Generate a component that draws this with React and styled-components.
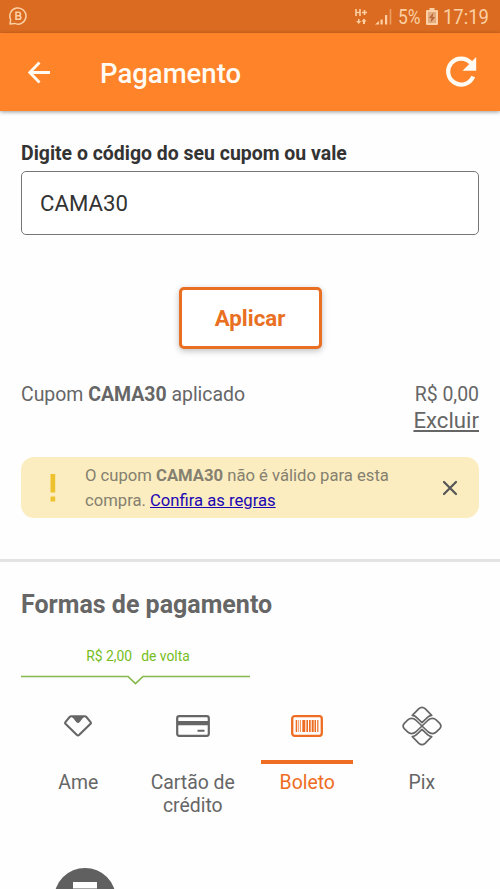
import styled, { createGlobalStyle } from 'styled-components';

const GlobalStyle = createGlobalStyle`
    * {
        box-sizing: border-box;
        margin: 0;
        padding: 0;
    }
    body {
        background-color: #fefefe;
        color: #666;
        font-family: Roboto, sans-serif;
        overflow: hidden;
    }
    button {
        font-family: inherit;
        background: none;
        border: none;
        cursor: pointer;
    }
    svg {
        display: block;
    }
`;

const Screen = styled.div`
    width: 500px;
    height: 889px;
    overflow: hidden;
    display: flex;
    flex-direction: column;
    > * {
        flex-shrink: 0;
    }
`;

const StatusBar = styled.div`
    height: 33px;
    padding: 0 11px 0 9px;
    display: flex;
    align-items: center;
    justify-content: space-between;
    background-color: #da6b20;
    color: #fcd0a4;
`;

const StatusIcons = styled.div`
    display: flex;
    align-items: center;
    height: 33px;
`;

const SignalWrap = styled.div`
    margin: 0 6px 0 7px;
`;

const StatusText = styled.span`
    width: ${({ $width }) => $width}px;
    margin-left: ${({ $gap }) => $gap || 0}px;
    font-size: 20px;
    line-height: 33px;
    white-space: nowrap;
    padding-top: 1px;
    transform: scaleX(${({ $scale }) => $scale});
    transform-origin: left;
`;

const Header = styled.header`
    height: 78px;
    padding: 0 23px 0 28px;
    display: flex;
    align-items: center;
    background-color: #fe8329;
    color: #fffaf2;
    box-shadow: 0 1px 4px rgba(0, 0, 0, 0.4);
    h1 {
        flex: 1;
        margin-left: 49px;
        font-size: 27.5px;
        font-weight: 500;
        line-height: 32px;
        padding-top: 4px;
    }
`;

const CouponSection = styled.section`
    height: 448px;
    padding: 31px 21px 0;
    display: flex;
    flex-direction: column;
    label {
        font-size: 19.45px;
        font-weight: 700;
        line-height: 24px;
        color: #333;
    }
`;

const CouponInput = styled.input`
    height: 64px;
    margin-top: 5px;
    padding: 0 18px;
    border: 1px solid #777;
    border-radius: 5px;
    outline: none;
    background-color: #fff;
    color: #333;
    font-family: inherit;
    font-size: 22.2px;
`;

const ApplyButton = styled.button`
    align-self: center;
    width: 143px;
    height: 62px;
    margin-top: 52px;
    border: 3px solid #e96f23;
    border-radius: 5px;
    background-color: #fff;
    box-shadow: 0 2px 6px rgba(0, 0, 0, 0.25);
    color: #e96f23;
    font-size: 22.3px;
    font-weight: 700;
`;

const AppliedRow = styled.div`
    margin-top: 33px;
    display: flex;
    justify-content: space-between;
    font-size: 19.45px;
    line-height: 26px;
`;

const AppliedValue = styled.div`
    display: flex;
    flex-direction: column;
    align-items: flex-end;
    button {
        color: #666;
        font-size: 22.2px;
        line-height: 24px;
        text-decoration: underline;
    }
`;

const Alert = styled.div`
    height: 61px;
    margin-top: 25px;
    padding: 0 21px 0 28px;
    display: flex;
    align-items: center;
    border-radius: 13px;
    background-color: #fbedc0;
    color: #85806f;
    p {
        flex: 1;
        margin-left: 28px;
        font-size: 16.65px;
        line-height: 25px;
        white-space: nowrap;
    }
    a {
        color: #1c06b4;
        text-decoration: underline;
    }
`;

const PaymentSection = styled.section`
    border-top: 3px solid #e3e3e3;
    padding: 28px 21px 0;
    h2 {
        font-size: 25px;
        font-weight: 700;
        line-height: 30px;
    }
`;

const Cashback = styled.div`
    width: 229px;
    margin-top: 27px;
    color: #76bd22;
    p {
        padding-left: 5px;
        text-align: center;
        font-size: 13.9px;
        line-height: 18px;
    }
    span {
        margin-left: 9px;
    }
    svg {
        margin-top: 10px;
    }
`;

const Tabs = styled.div`
    display: grid;
    grid-template-columns: repeat(4, 1fr);
    margin-top: 20px;
`;

const Tab = styled.button`
    display: flex;
    flex-direction: column;
    align-items: center;
    color: ${({ $active }) => ($active ? '#ee6d22' : '#666')};
    font-size: 19.4px;
    line-height: 23px;
    .icon {
        height: 41px;
        display: flex;
        align-items: center;
        justify-content: center;
    }
    .label {
        max-width: 100px;
    }
    .bar {
        width: 92px;
        height: 4px;
        margin: 14px 0 7px;
        background-color: ${({ $active }) =>
            $active ? '#ee6d22' : 'transparent'};
    }
`;

const Round = styled.div`
    width: 62px;
    height: 62px;
    margin: 51px 0 0 33px;
    padding-top: 14px;
    display: flex;
    justify-content: center;
    border-radius: 50%;
    background-color: #606060;
`;

function BusinessIcon() {
    return (
        <svg width="19" height="19" viewBox="0 0 19 19" fill="none">
            <path
                d="M1.1 17.1 1.6 12.5A8.1 8.1 0 1 1 5.6 16.4Z"
                stroke="currentColor"
                strokeWidth="1.5"
                strokeLinejoin="round"
            />
            <path
                d="M7 5.2h2.7a1.7 1.7 0 0 1 0 3.5H7zM7 8.7h3a1.8 1.8 0 0 1 0 3.6H7z"
                stroke="currentColor"
                strokeWidth="1.6"
            />
        </svg>
    );
}

function NetworkIcon() {
    return (
        <svg width="13" height="18" viewBox="0 0 13 18" fill="none">
            <path
                d="M1 1v7M5 1v7M1 4.5h4M7 4.5h5M9.5 2v5"
                stroke="currentColor"
                strokeWidth="1.6"
            />
            <path
                d="M3 11v2H1.2L3.7 16 6.2 13H4.5v-2zM8 16v-2.5H6.4L9 10.6l2.6 2.9H10V16z"
                fill="currentColor"
            />
        </svg>
    );
}

function SignalIcon() {
    return (
        <svg width="17" height="17" viewBox="0 0 17 17">
            <path
                d="M0 16.5 4 13v3.5zM5.5 11.5h2.2v5H5.5zM10 7h2.2v9.5H10z"
                fill="currentColor"
            />
            <path
                d="M14.6 1h1.7v15.5h-1.7z"
                fill="currentColor"
                opacity="0.5"
            />
        </svg>
    );
}

function BatteryIcon() {
    return (
        <svg width="12" height="17" viewBox="0 0 12 17">
            <path
                d="M3.5 0h5v2H11a1 1 0 0 1 1 1v13a1 1 0 0 1-1 1H1a1 1 0 0 1-1-1V3a1 1 0 0 1 1-1h2.5z"
                fill="currentColor"
            />
            <path d="M2 4h8v11H2z" fill="#e2ac80" />
            <path d="M7.5 4.5 2.8 10h2.7l-1 4.7L9.3 9H6.6z" fill="#b9693a" />
        </svg>
    );
}

function BackIcon() {
    return (
        <svg width="23" height="23" viewBox="0 0 23 23" fill="none">
            <path
                d="M11.5 1.5 1.8 11.5l9.7 10M1.8 11.5H22"
                stroke="currentColor"
                strokeWidth="2.8"
            />
        </svg>
    );
}

function ReloadIcon() {
    return (
        <svg width="31" height="32" viewBox="0 0 31 32" fill="none">
            <path
                d="M25 7A13 13 0 1 0 27.2 20.5"
                stroke="currentColor"
                strokeWidth="4.2"
            />
            <path d="M30.2 1v13.7H16.5z" fill="currentColor" />
        </svg>
    );
}

function WarningIcon() {
    return (
        <svg width="8" height="28" viewBox="0 0 8 28" fill="#eec22d">
            <path d="M1.5 0h4.7v18.5H1.5zM1.5 22.5h4.7v5H1.5z" />
        </svg>
    );
}

function CloseIcon() {
    return (
        <svg width="16" height="16" viewBox="0 0 16 16" fill="none">
            <path
                d="m2 2 12 12M14 2 2 14"
                stroke="#555"
                strokeWidth="2.2"
                strokeLinecap="round"
            />
        </svg>
    );
}

function AmeIcon() {
    return (
        <svg width="28" height="22" viewBox="0 0 28 22" fill="none">
            <path
                d="M7.3 1.3h13.4q1 0 1.7.7l4 4.8q1 1.2-.1 2.3L15.3 19.8q-1.3 1.2-2.6 0L1.7 9.1Q.6 8 1.6 6.8L5.6 2q.7-.7 1.700-.7z"
                stroke="currentColor"
                strokeWidth="2.1"
            />
            <path
                d="M5.8 1.300h16.400q-2.300.6-3.500 2l-2.900 3.700q-1.800 1.800-3.600 0L9.300 3.300q-1.200-1.400-3.500-2z"
                fill="currentColor"
            />
        </svg>
    );
}

function CardIcon() {
    return (
        <svg width="34" height="22" viewBox="0 0 34 22" fill="none">
            <rect
                x="1.2"
                y="1.2"
                width="31.6"
                height="19.6"
                rx="2"
                stroke="currentColor"
                strokeWidth="2.2"
            />
            <path d="M1 6h32v4.300H1zM21.500 14.700h7v2h-7z" fill="currentColor" />
        </svg>
    );
}

function BoletoIcon() {
    return (
        <svg width="32" height="22" viewBox="0 0 32 22" fill="none">
            <rect
                x="1.2"
                y="1.2"
                width="29.6"
                height="19.6"
                rx="2.5"
                stroke="currentColor"
                strokeWidth="2.3"
            />
            <path
                d="M4.700 5h1.500v12H4.700zM7.400 5h.7v12h-.7zM9.100 5h.7v12h-.7zM11.300 5h3v12h-3zM15.400 5H17v12h-1.600zM18 5h1.700v12H18zM20.700 5h2v12h-2zM23.500 5H25v12h-1.500zM26.200 5h1.200v12h-1.200z"
                fill="currentColor"
            />
        </svg>
    );
}

function PixIcon() {
    return (
        <svg
            width="40"
            height="40"
            viewBox="0 0 40 40"
            fill="none"
            stroke="currentColor"
            strokeWidth="1.7"
            strokeLinejoin="round"
        >
            <path d="M20 16.700 14.500 11.400q-2-1.900-4.200-2l6.600-6.700q3.100-2.800 6.200 0l6.600 6.700q-2.200.1-4.200 2z" />
            <path d="M20 23.300 14.500 28.600q-2 1.900-4.200 2l6.600 6.700q3.100 2.800 6.200 0l6.600-6.700q-2.200-.1-4.200-2z" />
            <path d="m20 20-6.300-6q-1.800-1.600-4.300-1.600-2 0-3.500 1.400L2.500 17.100q-2.800 2.900 0 5.800l3.400 3.300q1.500 1.400 3.500 1.400 2.500 0 4.300-1.600z" />
            <path d="m20 20 6.300-6q1.800-1.600 4.300-1.600 2 0 3.500 1.400l3.400 3.300q2.800 2.900 0 5.800l-3.400 3.300q-1.500 1.400-3.500 1.400-2.500 0-4.300-1.600z" />
        </svg>
    );
}

const methods = [
    { id: 'ame', text: 'Ame', Icon: AmeIcon },
    { id: 'card', text: 'Cartão de crédito', Icon: CardIcon },
    { id: 'boleto', text: 'Boleto', Icon: BoletoIcon, active: true },
    { id: 'pix', text: 'Pix', Icon: PixIcon },
];

export default function App() {
    return (
        <Screen>
            <GlobalStyle />
            <StatusBar>
                <BusinessIcon />
                <StatusIcons>
                    <NetworkIcon />
                    <SignalWrap>
                        <SignalIcon />
                    </SignalWrap>
                    <StatusText $width={28} $scale={0.87}>
                        5%
                    </StatusText>
                    <BatteryIcon />
                    <StatusText $width={46} $gap={5} $scale={0.92}>
                        17:19
                    </StatusText>
                </StatusIcons>
            </StatusBar>
            <Header>
                <BackIcon />
                <h1>Pagamento</h1>
                <ReloadIcon />
            </Header>
            <CouponSection>
                <label htmlFor="coupon">
                    Digite o código do seu cupom ou vale
                </label>
                <CouponInput id="coupon" defaultValue="CAMA30" />
                <ApplyButton>Aplicar</ApplyButton>
                <AppliedRow>
                    <p>
                        Cupom <b>CAMA30</b> aplicado
                    </p>
                    <AppliedValue>
                        <p>R$ 0,00</p>
                        <button>Excluir</button>
                    </AppliedValue>
                </AppliedRow>
                <Alert>
                    <WarningIcon />
                    <p>
                        O cupom <b>CAMA30</b> não é válido para esta
                        <br />
                        compra. <a href="#regras">Confira as regras</a>
                    </p>
                    <CloseIcon />
                </Alert>
            </CouponSection>
            <PaymentSection>
                <h2>Formas de pagamento</h2>
                <Cashback>
                    <p>
                        R$ 2,00<span>de volta</span>
                    </p>
                    <svg
                        width="229"
                        height="10"
                        viewBox="0 0 229 10"
                        fill="none"
                    >
                        <path
                            d="M0 1.500h107l7.500 7 7.500-7h107"
                            stroke="#84b94d"
                            strokeWidth="1.7"
                        />
                    </svg>
                </Cashback>
                <Tabs>
                    {methods.map(({ id, text, Icon, active }) => (
                        <Tab key={id} $active={active}>
                            <span className="icon">
                                <Icon />
                            </span>
                            <span className="bar" />
                            <span className="label">{text}</span>
                        </Tab>
                    ))}
                </Tabs>
                <Round>
                    <svg width="24" height="30" viewBox="0 0 24 30">
                        <path d="M0 0h24v30H0z" fill="#fff" />
                        <path d="M0 6h24v3H0z" fill="#aaa" />
                    </svg>
                </Round>
            </PaymentSection>
        </Screen>
    );
}
